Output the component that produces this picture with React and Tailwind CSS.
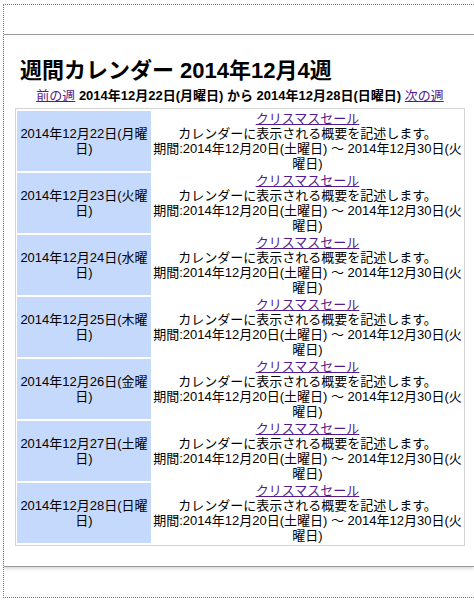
import React from "react";

const days = [
  { date: "2014年12月22日", dow: "月" },
  { date: "2014年12月23日", dow: "火" },
  { date: "2014年12月24日", dow: "水" },
  { date: "2014年12月25日", dow: "木" },
  { date: "2014年12月26日", dow: "金" },
  { date: "2014年12月27日", dow: "土" },
  { date: "2014年12月28日", dow: "日" },
];

const font = "font-['Liberation_Sans','Noto_Sans_CJK_JP',sans-serif]";

const App = () => {
  return (
    <div className={`bg-white ${font} text-black`}>
      {/* outer dotted frame */}
      <div className="ml-[3px] mt-[4px] w-[471px] border-t border-l border-b border-dotted border-[#777]">
        <div className="h-[29px]" />

        {/* main panel */}
        <div className="border-t border-b border-[#999] shadow-[0_2px_3px_rgba(0,0,0,0.15)] pt-[23px] pb-[20px]">
          <h1 className="ml-[16px] text-[22px] leading-[26px] font-bold">週間カレンダー 2014年12月4週</h1>

          <div className="ml-[11px] w-[450px] mt-[3px] text-center text-[13px] leading-[18px] whitespace-nowrap">
            <a href="#" className="text-[#551a8b] underline">前の週</a>{" "}
            <b>2014年12月22日(月曜日) から 2014年12月28日(日曜日)</b>{" "}
            <a href="#" className="text-[#551a8b] underline">次の週</a>
          </div>

          {/* week table */}
          <div className="ml-[11px] mt-[3px] w-[450px] border border-[#d4d4d4] pt-[2px] pb-[2px] px-px flex flex-col gap-[2px] text-[13px] leading-[15px]">
            {days.map((d) => (
              <div key={d.date} className="flex gap-px h-[60px]">
                <div className="w-[134px] bg-[#c5d9fc] flex flex-col items-center justify-center text-center whitespace-nowrap">
                  <span>{d.date}({d.dow}曜</span>
                  <span>日)</span>
                </div>
                <div className="w-[311px] flex flex-col items-center text-center whitespace-nowrap">
                  <a href="#" className="text-[#551a8b] underline">クリスマスセール</a>
                  <span>カレンダーに表示される概要を記述します。</span>
                  <span>期間:2014年12月20日(土曜日) 〜 2014年12月30日(火</span>
                  <span>曜日)</span>
                </div>
              </div>
            ))}
          </div>
        </div>

        <div className="h-[30px]" />
      </div>
    </div>
  );
};

export default App;
